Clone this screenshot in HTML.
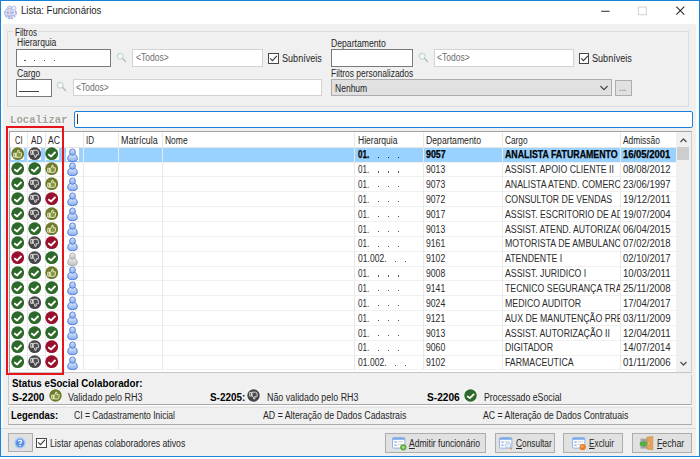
<!DOCTYPE html><html><head><meta charset="utf-8"><title>Lista: Funcionários</title><style>
html,body{margin:0;padding:0;}
body{width:700px;height:459px;overflow:hidden;background:#fff;position:relative;font-family:"Liberation Sans",sans-serif;}
#win{position:absolute;left:0;top:0;width:700px;height:459px;overflow:hidden;background:#f0f0f0;}
.a{position:absolute;box-sizing:border-box;}
.t{position:absolute;white-space:pre;transform-origin:0 100%;line-height:1;color:#1c1c1c;padding-bottom:0;}
.ui{font-size:10px;color:#262626;}
.uib{font-size:10px;font-weight:bold;color:#000;}
.g{font-size:10px;color:#2b2b2b;}
.gb{font-size:10px;font-weight:bold;color:#000;-webkit-text-stroke:0.25px #000;}
.ttl{font-size:10px;}
.loc{font-family:"Liberation Mono",monospace;font-weight:bold;font-size:11px;color:#a3a39b;text-shadow:0.8px 0.8px 0 #fff;}
.gray{color:#6d6d6d;}
.inp{background:#fff;border:1px solid #7a7a7a;}
.ro{background:#fff;border:1px solid #d2d2d2;}
.btn{background:#e1e1e1;border:1px solid #adadad;}
.cb{background:#fff;border:1px solid #474747;}
</style></head><body><div id="win">
<svg width="0" height="0" style="position:absolute"><defs>
<symbol id="i-ok" viewBox="0 0 14 14"><circle cx="7" cy="7" r="6.7" fill="#2c692b"/><path d="M3.7 8.1 L6.6 10.2 L11.2 5.7" fill="none" stroke="#c9c27a" stroke-width="1.6" opacity=".55"/><path d="M3.4 7.6 L6.3 9.7 L10.9 5.2" fill="none" stroke="#fff" stroke-width="1.8"/></symbol>
<symbol id="i-err" viewBox="0 0 14 14"><circle cx="7" cy="7" r="6.7" fill="#9a0e2e"/><path d="M3.7 8.1 L6.6 10.2 L11.2 5.7" fill="none" stroke="#e0a080" stroke-width="1.6" opacity=".5"/><path d="M3.4 7.6 L6.3 9.7 L10.9 5.2" fill="none" stroke="#fff" stroke-width="1.8"/></symbol>
<symbol id="i-up" viewBox="0 0 14 14"><circle cx="7" cy="7" r="6.7" fill="#6d7b2c"/><path d="M2.9 6.5 H4.8 V10.6 H2.9 Z M5.4 6.7 L6.8 5.6 L7.3 3.4 Q8.8 3.0 8.7 4.6 L8.4 6 L10.6 6 Q11.4 6.2 11.1 7 L10.5 10 Q10.3 10.8 9.4 10.8 L5.4 10.8 Z" fill="#8a9638" stroke="#f3f1da" stroke-width="0.95" stroke-linejoin="round"/></symbol>
<symbol id="i-dn" viewBox="0 0 14 14"><circle cx="7" cy="7" r="6.7" fill="#45454b"/><path transform="matrix(1 0 0 -1 0 14.2)" d="M2.9 6.5 H4.8 V10.6 H2.9 Z M5.4 6.7 L6.8 5.6 L7.3 3.4 Q8.8 3.0 8.7 4.6 L8.4 6 L10.6 6 Q11.4 6.2 11.1 7 L10.5 10 Q10.3 10.8 9.4 10.8 L5.4 10.8 Z" fill="#4e4e5c" stroke="#efe9d8" stroke-width="0.95" stroke-linejoin="round"/></symbol>
<linearGradient id="gu" x1="0" y1="0" x2="0" y2="1"><stop offset="0" stop-color="#dde7fb"/><stop offset="1" stop-color="#85abee"/></linearGradient>
<linearGradient id="gg" x1="0" y1="0" x2="0" y2="1"><stop offset="0" stop-color="#efefef"/><stop offset="1" stop-color="#bdbdbd"/></linearGradient>
<symbol id="i-usr" viewBox="0 0 12 14"><path d="M0.7 11.3 Q0.5 7.2 3 6.5 L8 6.5 Q10.5 7.2 10.3 11.3 Q10.2 13.5 5.5 13.7 Q0.8 13.5 0.7 11.3 Z" fill="url(#gu)" stroke="#4a78d6" stroke-width="0.9"/><ellipse cx="5.5" cy="4.1" rx="2.9" ry="3.2" fill="url(#gu)" stroke="#4a78d6" stroke-width="0.9"/></symbol>
<symbol id="i-usrg" viewBox="0 0 12 14"><path d="M0.7 11.3 Q0.5 7.2 3 6.5 L8 6.5 Q10.5 7.2 10.3 11.3 Q10.2 13.5 5.5 13.7 Q0.8 13.5 0.7 11.3 Z" fill="url(#gg)" stroke="#a4a4a4" stroke-width="0.8"/><ellipse cx="5.5" cy="4.1" rx="2.9" ry="3.2" fill="url(#gg)" stroke="#a4a4a4" stroke-width="0.8"/></symbol>
<symbol id="i-mag" viewBox="0 0 12 12"><circle cx="4.6" cy="4.6" r="3.3" fill="#f2f6f5" stroke="#b3cec8" stroke-width="1"/><path d="M3 3.6 Q3.6 2.6 4.8 2.6" fill="none" stroke="#c5d6d2" stroke-width="0.7"/><path d="M7.2 7.2 L10.4 10.4" stroke="#aebcc8" stroke-width="1.5" stroke-linecap="round"/></symbol>
</defs></svg>
<div class="a " style="left:0px;top:0px;width:700.00px;height:23.90px;background:#fff;"></div>
<span class="t ttl" style="left:20.6px;top:16.23px;transform:translateY(-100%) scaleX(0.9580);">Lista: Funcionários</span>
<svg class="a" style="left:3px;top:4px" width="16" height="16" viewBox="0 0 16 16"><ellipse cx="7.4" cy="9" rx="5.8" ry="5.6" fill="#ebebf6" stroke="#8296da" stroke-width="1" stroke-dasharray="2 1"/><ellipse cx="6.8" cy="8.6" rx="2.6" ry="5.4" fill="#d9d6ee" stroke="#a8b4e0" stroke-width="0.7"/><path d="M1.8 8 Q7 10 13 7.6 M2.6 11.6 Q7 13 12.4 11" fill="none" stroke="#748cd8" stroke-width="0.9" stroke-dasharray="1.6 1"/><circle cx="11" cy="4.2" r="2" fill="#f4f4fb" stroke="#a8b4e0" stroke-width="0.8"/><ellipse cx="6.6" cy="3.4" rx="2.2" ry="1.4" fill="#dcdcf0" stroke="#a8b4e0" stroke-width="0.7"/></svg>
<svg class="a" style="left:590px;top:0" width="110" height="24" viewBox="0 0 110 24"><path d="M11.2 11.3 H19.6" stroke="#3c3c3c" stroke-width="1.1"/><rect x="48.4" y="7.0" width="7.9" height="7.7" fill="none" stroke="#d2d2d2" stroke-width="1"/><path d="M86.3 6.7 L94.3 14.7 M94.3 6.7 L86.3 14.7" stroke="#2a2a2a" stroke-width="1.1"/></svg>
<div class="a " style="left:7.2px;top:31.0px;width:681.40px;height:76.00px;border:1px solid #dcdcdc;"></div>
<div class="a " style="left:13px;top:27px;width:25.00px;height:10.00px;background:#f0f0f0;"></div>
<span class="t ui" style="left:14.6px;top:37.54px;transform:translateY(-100%) scaleX(0.8045);">Filtros</span>
<span class="t ui" style="left:16.8px;top:48.34px;transform:translateY(-100%) scaleX(0.8519);">Hierarquia</span>
<div class="a inp" style="left:16.3px;top:49.2px;width:95.00px;height:17.50px;"></div>
<div class="a " style="left:24.4px;top:59.7px;width:1.20px;height:1.20px;background:#555;"></div>
<div class="a " style="left:34.3px;top:59.7px;width:1.20px;height:1.20px;background:#555;"></div>
<div class="a " style="left:44.1px;top:59.7px;width:1.20px;height:1.20px;background:#555;"></div>
<div class="a " style="left:53.8px;top:59.7px;width:1.20px;height:1.20px;background:#555;"></div>
<svg class="a" style="left:116.40px;top:51.70px" width="11" height="11"><use href="#i-mag"/></svg>
<div class="a ro" style="left:132.2px;top:49.3px;width:130.70px;height:17.30px;"></div>
<span class="t ui gray" style="left:135.5px;top:63.34px;transform:translateY(-100%) scaleX(0.8524);">&lt;Todos&gt;</span>
<div class="a cb" style="left:267.8px;top:53.0px;width:10.80px;height:10.80px;"></div>
<span class="t ui" style="left:281.6px;top:64.33px;transform:translateY(-100%) scaleX(0.9063);">Subníveis</span>
<span class="t ui" style="left:331.0px;top:48.54px;transform:translateY(-100%) scaleX(0.8648);">Departamento</span>
<div class="a inp" style="left:331.0px;top:49.2px;width:81.90px;height:17.50px;"></div>
<svg class="a" style="left:417.50px;top:51.70px" width="11" height="11"><use href="#i-mag"/></svg>
<div class="a ro" style="left:434.0px;top:49.3px;width:139.60px;height:17.30px;"></div>
<span class="t ui gray" style="left:437.3px;top:63.34px;transform:translateY(-100%) scaleX(0.8524);">&lt;Todos&gt;</span>
<div class="a cb" style="left:578.6px;top:53.0px;width:10.80px;height:10.80px;"></div>
<span class="t ui" style="left:592.4px;top:64.33px;transform:translateY(-100%) scaleX(0.9063);">Subníveis</span>
<span class="t ui" style="left:16.8px;top:79.13px;transform:translateY(-100%) scaleX(0.8519);">Cargo</span>
<div class="a inp" style="left:16.2px;top:79.0px;width:35.80px;height:17.60px;"></div>
<div class="a " style="left:19.0px;top:90.9px;width:20.00px;height:1.30px;background:#444;"></div>
<svg class="a" style="left:56.30px;top:81.40px" width="11" height="11"><use href="#i-mag"/></svg>
<div class="a ro" style="left:72.6px;top:79.2px;width:249.20px;height:17.00px;"></div>
<span class="t ui gray" style="left:75.9px;top:93.03px;transform:translateY(-100%) scaleX(0.8524);">&lt;Todos&gt;</span>
<span class="t ui" style="left:331.0px;top:79.13px;transform:translateY(-100%) scaleX(0.8452);">Filtros personalizados</span>
<div class="a btn" style="left:331.0px;top:79.2px;width:280.80px;height:17.00px;"></div>
<span class="t ui" style="left:334.6px;top:93.93px;transform:translateY(-100%) scaleX(0.8520);">Nenhum</span>
<svg class="a" style="left:599px;top:84px" width="10" height="8" viewBox="0 0 10 8"><path d="M1.4 2 L5 5.6 L8.6 2" fill="none" stroke="#444" stroke-width="1.1"/></svg>
<div class="a btn" style="left:615.2px;top:80.2px;width:16.40px;height:15.40px;"></div>
<span class="t ui gray" style="left:619.4px;top:92.83px;transform:translateY(-100%) scaleX(0.8750);">...</span>
<svg class="a" style="left:267.8px;top:53.0px" width="11" height="11" viewBox="0 0 11 11"><path d="M2.2 5.4 L4.5 7.7 L8.9 2.9" fill="none" stroke="#3a3a3a" stroke-width="1.15"/></svg>
<svg class="a" style="left:578.6px;top:53.0px" width="11" height="11" viewBox="0 0 11 11"><path d="M2.2 5.4 L4.5 7.7 L8.9 2.9" fill="none" stroke="#3a3a3a" stroke-width="1.15"/></svg>
<span class="t loc" style="left:10.0px;top:126.37px;transform:translateY(-100%) scaleX(0.9694);">Localizar</span>
<div class="a " style="left:74.0px;top:111.0px;width:618.80px;height:17.40px;background:#fff;border:1.1px solid #1a80d9;border-radius:2px;"></div>
<div class="a " style="left:76.7px;top:113.7px;width:1.10px;height:10.40px;background:#3a3a3a;"></div>
<div class="a " style="left:8.7px;top:131.1px;width:682.90px;height:241.50px;background:#fff;border:1px solid #9ea2aa;border-right-color:#cdcdcd;border-bottom-color:#c6c6c6;"></div>
<div class="a " style="left:9.7px;top:147.3px;width:665.90px;height:14.25px;background:#99d1ff;"></div>
<div class="a " style="left:10.799999999999999px;top:147.3px;width:13.40px;height:13.20px;background:#fff;"></div>
<div class="a " style="left:28.0px;top:147.3px;width:13.40px;height:13.20px;background:#fff;"></div>
<div class="a " style="left:45.199999999999996px;top:147.3px;width:13.40px;height:13.20px;background:#fff;"></div>
<div class="a " style="left:65.8px;top:147.3px;width:13.10px;height:13.60px;background:#fff;"></div>
<div class="a " style="left:9.7px;top:161.55px;width:665.90px;height:1.00px;background:#f0f0f0;"></div>
<div class="a " style="left:9.7px;top:176.4px;width:665.90px;height:1.00px;background:#f0f0f0;"></div>
<div class="a " style="left:9.7px;top:191.25000000000003px;width:665.90px;height:1.00px;background:#f0f0f0;"></div>
<div class="a " style="left:9.7px;top:206.10000000000002px;width:665.90px;height:1.00px;background:#f0f0f0;"></div>
<div class="a " style="left:9.7px;top:220.95000000000002px;width:665.90px;height:1.00px;background:#f0f0f0;"></div>
<div class="a " style="left:9.7px;top:235.8px;width:665.90px;height:1.00px;background:#f0f0f0;"></div>
<div class="a " style="left:9.7px;top:250.65px;width:665.90px;height:1.00px;background:#f0f0f0;"></div>
<div class="a " style="left:9.7px;top:265.5px;width:665.90px;height:1.00px;background:#f0f0f0;"></div>
<div class="a " style="left:9.7px;top:280.35px;width:665.90px;height:1.00px;background:#f0f0f0;"></div>
<div class="a " style="left:9.7px;top:295.2px;width:665.90px;height:1.00px;background:#f0f0f0;"></div>
<div class="a " style="left:9.7px;top:310.04999999999995px;width:665.90px;height:1.00px;background:#f0f0f0;"></div>
<div class="a " style="left:9.7px;top:324.9px;width:665.90px;height:1.00px;background:#f0f0f0;"></div>
<div class="a " style="left:9.7px;top:339.75px;width:665.90px;height:1.00px;background:#f0f0f0;"></div>
<div class="a " style="left:9.7px;top:354.6px;width:665.90px;height:1.00px;background:#f0f0f0;"></div>
<div class="a " style="left:9.7px;top:369.45px;width:665.90px;height:1.00px;background:#f0f0f0;"></div>
<div class="a " style="left:9.7px;top:146.6px;width:665.90px;height:0.80px;background:#e5e5e5;"></div>
<div class="a " style="left:26.9px;top:132.1px;width:1.00px;height:237.95px;background:#e9e9e9;"></div>
<div class="a " style="left:44.5px;top:132.1px;width:1.00px;height:237.95px;background:#e9e9e9;"></div>
<div class="a " style="left:62.5px;top:132.1px;width:1.00px;height:237.95px;background:#e9e9e9;"></div>
<div class="a " style="left:83.1px;top:132.1px;width:1.00px;height:237.95px;background:#e9e9e9;"></div>
<div class="a " style="left:118.1px;top:132.1px;width:1.00px;height:237.95px;background:#e9e9e9;"></div>
<div class="a " style="left:162.1px;top:132.1px;width:1.00px;height:237.95px;background:#e9e9e9;"></div>
<div class="a " style="left:354.1px;top:132.1px;width:1.00px;height:237.95px;background:#e9e9e9;"></div>
<div class="a " style="left:422.5px;top:132.1px;width:1.00px;height:237.95px;background:#e9e9e9;"></div>
<div class="a " style="left:502.1px;top:132.1px;width:1.00px;height:237.95px;background:#e9e9e9;"></div>
<div class="a " style="left:620.1px;top:132.1px;width:1.00px;height:237.95px;background:#e9e9e9;"></div>
<span class="t ui" style="left:15.0px;top:145.84px;transform:translateY(-100%) scaleX(0.7500);">CI</span>
<span class="t ui" style="left:30.5px;top:145.84px;transform:translateY(-100%) scaleX(0.8062);">AD</span>
<span class="t ui" style="left:47.7px;top:145.84px;transform:translateY(-100%) scaleX(0.8638);">AC</span>
<span class="t ui" style="left:85.9px;top:145.84px;transform:translateY(-100%) scaleX(0.8100);">ID</span>
<span class="t ui" style="left:121.2px;top:145.84px;transform:translateY(-100%) scaleX(0.8949);">Matrícula</span>
<span class="t ui" style="left:165.4px;top:145.84px;transform:translateY(-100%) scaleX(0.8473);">Nome</span>
<span class="t ui" style="left:357.6px;top:145.84px;transform:translateY(-100%) scaleX(0.8541);">Hierarquia</span>
<span class="t ui" style="left:426.0px;top:145.84px;transform:translateY(-100%) scaleX(0.8680);">Departamento</span>
<span class="t ui" style="left:505.0px;top:145.84px;transform:translateY(-100%) scaleX(0.8298);">Cargo</span>
<span class="t ui" style="left:623.2px;top:145.84px;transform:translateY(-100%) scaleX(0.8382);">Admissão</span>
<svg class="a" style="left:10.70px;top:147.35px" width="13.4" height="13.4"><use href="#i-up"/></svg>
<svg class="a" style="left:27.90px;top:147.35px" width="13.4" height="13.4"><use href="#i-dn"/></svg>
<svg class="a" style="left:45.10px;top:147.35px" width="13.4" height="13.4"><use href="#i-ok"/></svg>
<svg class="a" style="left:67px;top:147.60px" width="12" height="14"><use href="#i-usr"/></svg>
<span class="t gb" style="left:357.5px;top:160.34px;transform:translateY(-100%) scaleX(0.8058);">01.</span>
<div class="a " style="left:377.5px;top:156.6px;width:1.60px;height:1.20px;background:#222;"></div>
<div class="a " style="left:387.5px;top:156.6px;width:1.60px;height:1.20px;background:#222;"></div>
<div class="a " style="left:397.5px;top:156.6px;width:1.60px;height:1.20px;background:#222;"></div>
<span class="t gb" style="left:426.0px;top:160.34px;transform:translateY(-100%) scaleX(0.8811);">9057</span>
<div class="a" style="left:503px;top:147.30px;width:116.6px;height:14.85px;overflow:hidden;">
<span class="t gb" style="left:2.2px;top:13.04px;transform:translateY(-100%) scaleX(0.8800);">ANALISTA FATURAMENTO</span></div>
<span class="t gb" style="left:623.2px;top:160.34px;transform:translateY(-100%) scaleX(0.9432);">16/05/2001</span>
<svg class="a" style="left:10.70px;top:162.20px" width="13.4" height="13.4"><use href="#i-ok"/></svg>
<svg class="a" style="left:27.90px;top:162.20px" width="13.4" height="13.4"><use href="#i-ok"/></svg>
<svg class="a" style="left:45.10px;top:162.20px" width="13.4" height="13.4"><use href="#i-up"/></svg>
<svg class="a" style="left:67px;top:162.45px" width="12" height="14"><use href="#i-usr"/></svg>
<span class="t g" style="left:357.5px;top:175.19px;transform:translateY(-100%) scaleX(0.8058);">01.</span>
<div class="a " style="left:377.5px;top:171.45px;width:1.20px;height:1.20px;background:#555;"></div>
<div class="a " style="left:387.5px;top:171.45px;width:1.20px;height:1.20px;background:#555;"></div>
<div class="a " style="left:397.5px;top:171.45px;width:1.20px;height:1.20px;background:#555;"></div>
<span class="t g" style="left:426.0px;top:175.19px;transform:translateY(-100%) scaleX(0.8632);">9013</span>
<div class="a" style="left:503px;top:162.15px;width:116.6px;height:14.85px;overflow:hidden;">
<span class="t g" style="left:2.2px;top:13.04px;transform:translateY(-100%) scaleX(0.8750);">ASSIST. APOIO CLIENTE II</span></div>
<span class="t g" style="left:623.2px;top:175.19px;transform:translateY(-100%) scaleX(0.9512);">08/08/2012</span>
<svg class="a" style="left:10.70px;top:177.05px" width="13.4" height="13.4"><use href="#i-ok"/></svg>
<svg class="a" style="left:27.90px;top:177.05px" width="13.4" height="13.4"><use href="#i-dn"/></svg>
<svg class="a" style="left:45.10px;top:177.05px" width="13.4" height="13.4"><use href="#i-up"/></svg>
<svg class="a" style="left:67px;top:177.30px" width="12" height="14"><use href="#i-usr"/></svg>
<span class="t g" style="left:357.5px;top:190.03px;transform:translateY(-100%) scaleX(0.8058);">01.</span>
<div class="a " style="left:377.5px;top:186.29999999999998px;width:1.20px;height:1.20px;background:#555;"></div>
<div class="a " style="left:387.5px;top:186.29999999999998px;width:1.20px;height:1.20px;background:#555;"></div>
<div class="a " style="left:397.5px;top:186.29999999999998px;width:1.20px;height:1.20px;background:#555;"></div>
<span class="t g" style="left:426.0px;top:190.03px;transform:translateY(-100%) scaleX(0.8632);">9073</span>
<div class="a" style="left:503px;top:177.00px;width:116.6px;height:14.85px;overflow:hidden;">
<span class="t g" style="left:2.2px;top:13.04px;transform:translateY(-100%) scaleX(0.8750);">ANALISTA ATEND. COMERCIAL</span></div>
<span class="t g" style="left:623.2px;top:190.03px;transform:translateY(-100%) scaleX(0.9512);">23/06/1997</span>
<svg class="a" style="left:10.70px;top:191.90px" width="13.4" height="13.4"><use href="#i-ok"/></svg>
<svg class="a" style="left:27.90px;top:191.90px" width="13.4" height="13.4"><use href="#i-dn"/></svg>
<svg class="a" style="left:45.10px;top:191.90px" width="13.4" height="13.4"><use href="#i-err"/></svg>
<svg class="a" style="left:67px;top:192.15px" width="12" height="14"><use href="#i-usr"/></svg>
<span class="t g" style="left:357.5px;top:204.89px;transform:translateY(-100%) scaleX(0.8058);">01.</span>
<div class="a " style="left:377.5px;top:201.15px;width:1.20px;height:1.20px;background:#555;"></div>
<div class="a " style="left:387.5px;top:201.15px;width:1.20px;height:1.20px;background:#555;"></div>
<div class="a " style="left:397.5px;top:201.15px;width:1.20px;height:1.20px;background:#555;"></div>
<span class="t g" style="left:426.0px;top:204.89px;transform:translateY(-100%) scaleX(0.8632);">9072</span>
<div class="a" style="left:503px;top:191.85px;width:116.6px;height:14.85px;overflow:hidden;">
<span class="t g" style="left:2.2px;top:13.04px;transform:translateY(-100%) scaleX(0.8750);">CONSULTOR DE VENDAS</span></div>
<span class="t g" style="left:623.2px;top:204.89px;transform:translateY(-100%) scaleX(0.9655);">19/12/2011</span>
<svg class="a" style="left:10.70px;top:206.75px" width="13.4" height="13.4"><use href="#i-ok"/></svg>
<svg class="a" style="left:27.90px;top:206.75px" width="13.4" height="13.4"><use href="#i-dn"/></svg>
<svg class="a" style="left:45.10px;top:206.75px" width="13.4" height="13.4"><use href="#i-up"/></svg>
<svg class="a" style="left:67px;top:207.00px" width="12" height="14"><use href="#i-usr"/></svg>
<span class="t g" style="left:357.5px;top:219.74px;transform:translateY(-100%) scaleX(0.8058);">01.</span>
<div class="a " style="left:377.5px;top:216.0px;width:1.20px;height:1.20px;background:#555;"></div>
<div class="a " style="left:387.5px;top:216.0px;width:1.20px;height:1.20px;background:#555;"></div>
<div class="a " style="left:397.5px;top:216.0px;width:1.20px;height:1.20px;background:#555;"></div>
<span class="t g" style="left:426.0px;top:219.74px;transform:translateY(-100%) scaleX(0.8632);">9017</span>
<div class="a" style="left:503px;top:206.70px;width:116.6px;height:14.85px;overflow:hidden;">
<span class="t g" style="left:2.2px;top:13.04px;transform:translateY(-100%) scaleX(0.8750);">ASSIST. ESCRITORIO DE ADVOCACIA</span></div>
<span class="t g" style="left:623.2px;top:219.74px;transform:translateY(-100%) scaleX(0.9512);">19/07/2004</span>
<svg class="a" style="left:10.70px;top:221.60px" width="13.4" height="13.4"><use href="#i-ok"/></svg>
<svg class="a" style="left:27.90px;top:221.60px" width="13.4" height="13.4"><use href="#i-ok"/></svg>
<svg class="a" style="left:45.10px;top:221.60px" width="13.4" height="13.4"><use href="#i-up"/></svg>
<svg class="a" style="left:67px;top:221.85px" width="12" height="14"><use href="#i-usr"/></svg>
<span class="t g" style="left:357.5px;top:234.59px;transform:translateY(-100%) scaleX(0.8058);">01.</span>
<div class="a " style="left:377.5px;top:230.85px;width:1.20px;height:1.20px;background:#555;"></div>
<div class="a " style="left:387.5px;top:230.85px;width:1.20px;height:1.20px;background:#555;"></div>
<div class="a " style="left:397.5px;top:230.85px;width:1.20px;height:1.20px;background:#555;"></div>
<span class="t g" style="left:426.0px;top:234.59px;transform:translateY(-100%) scaleX(0.8632);">9013</span>
<div class="a" style="left:503px;top:221.55px;width:116.6px;height:14.85px;overflow:hidden;">
<span class="t g" style="left:2.2px;top:13.04px;transform:translateY(-100%) scaleX(0.8750);">ASSIST. ATEND. AUTORIZAÇÃO</span></div>
<span class="t g" style="left:623.2px;top:234.59px;transform:translateY(-100%) scaleX(0.9512);">06/04/2015</span>
<svg class="a" style="left:10.70px;top:236.45px" width="13.4" height="13.4"><use href="#i-ok"/></svg>
<svg class="a" style="left:27.90px;top:236.45px" width="13.4" height="13.4"><use href="#i-dn"/></svg>
<svg class="a" style="left:45.10px;top:236.45px" width="13.4" height="13.4"><use href="#i-err"/></svg>
<svg class="a" style="left:67px;top:236.70px" width="12" height="14"><use href="#i-usr"/></svg>
<span class="t g" style="left:357.5px;top:249.44px;transform:translateY(-100%) scaleX(0.8058);">01.</span>
<div class="a " style="left:377.5px;top:245.7px;width:1.20px;height:1.20px;background:#555;"></div>
<div class="a " style="left:387.5px;top:245.7px;width:1.20px;height:1.20px;background:#555;"></div>
<div class="a " style="left:397.5px;top:245.7px;width:1.20px;height:1.20px;background:#555;"></div>
<span class="t g" style="left:426.0px;top:249.44px;transform:translateY(-100%) scaleX(0.8632);">9161</span>
<div class="a" style="left:503px;top:236.40px;width:116.6px;height:14.85px;overflow:hidden;">
<span class="t g" style="left:2.2px;top:13.04px;transform:translateY(-100%) scaleX(0.8750);">MOTORISTA DE AMBULANCIA</span></div>
<span class="t g" style="left:623.2px;top:249.44px;transform:translateY(-100%) scaleX(0.9512);">07/02/2018</span>
<svg class="a" style="left:10.70px;top:251.30px" width="13.4" height="13.4"><use href="#i-err"/></svg>
<svg class="a" style="left:27.90px;top:251.30px" width="13.4" height="13.4"><use href="#i-dn"/></svg>
<svg class="a" style="left:45.10px;top:251.30px" width="13.4" height="13.4"><use href="#i-ok"/></svg>
<svg class="a" style="left:67px;top:251.55px" width="12" height="14"><use href="#i-usrg"/></svg>
<span class="t g" style="left:357.5px;top:264.28px;transform:translateY(-100%) scaleX(0.8573);">01.002.</span>
<div class="a " style="left:395.0px;top:260.55px;width:1.20px;height:1.20px;background:#555;"></div>
<div class="a " style="left:404.9px;top:260.55px;width:1.20px;height:1.20px;background:#555;"></div>
<span class="t g" style="left:426.0px;top:264.28px;transform:translateY(-100%) scaleX(0.8632);">9102</span>
<div class="a" style="left:503px;top:251.25px;width:116.6px;height:14.85px;overflow:hidden;">
<span class="t g" style="left:2.2px;top:13.04px;transform:translateY(-100%) scaleX(0.8750);">ATENDENTE I</span></div>
<span class="t g" style="left:623.2px;top:264.28px;transform:translateY(-100%) scaleX(0.9512);">02/10/2017</span>
<svg class="a" style="left:10.70px;top:266.15px" width="13.4" height="13.4"><use href="#i-ok"/></svg>
<svg class="a" style="left:27.90px;top:266.15px" width="13.4" height="13.4"><use href="#i-ok"/></svg>
<svg class="a" style="left:45.10px;top:266.15px" width="13.4" height="13.4"><use href="#i-up"/></svg>
<svg class="a" style="left:67px;top:266.40px" width="12" height="14"><use href="#i-usr"/></svg>
<span class="t g" style="left:357.5px;top:279.13px;transform:translateY(-100%) scaleX(0.8058);">01.</span>
<div class="a " style="left:377.5px;top:275.40000000000003px;width:1.20px;height:1.20px;background:#555;"></div>
<div class="a " style="left:387.5px;top:275.40000000000003px;width:1.20px;height:1.20px;background:#555;"></div>
<div class="a " style="left:397.5px;top:275.40000000000003px;width:1.20px;height:1.20px;background:#555;"></div>
<span class="t g" style="left:426.0px;top:279.13px;transform:translateY(-100%) scaleX(0.8632);">9008</span>
<div class="a" style="left:503px;top:266.10px;width:116.6px;height:14.85px;overflow:hidden;">
<span class="t g" style="left:2.2px;top:13.04px;transform:translateY(-100%) scaleX(0.8750);">ASSIST. JURIDICO I</span></div>
<span class="t g" style="left:623.2px;top:279.13px;transform:translateY(-100%) scaleX(0.9655);">10/03/2011</span>
<svg class="a" style="left:10.70px;top:281.00px" width="13.4" height="13.4"><use href="#i-ok"/></svg>
<svg class="a" style="left:27.90px;top:281.00px" width="13.4" height="13.4"><use href="#i-ok"/></svg>
<svg class="a" style="left:45.10px;top:281.00px" width="13.4" height="13.4"><use href="#i-ok"/></svg>
<svg class="a" style="left:67px;top:281.25px" width="12" height="14"><use href="#i-usr"/></svg>
<span class="t g" style="left:357.5px;top:293.99px;transform:translateY(-100%) scaleX(0.8058);">01.</span>
<div class="a " style="left:377.5px;top:290.25000000000006px;width:1.20px;height:1.20px;background:#555;"></div>
<div class="a " style="left:387.5px;top:290.25000000000006px;width:1.20px;height:1.20px;background:#555;"></div>
<div class="a " style="left:397.5px;top:290.25000000000006px;width:1.20px;height:1.20px;background:#555;"></div>
<span class="t g" style="left:426.0px;top:293.99px;transform:translateY(-100%) scaleX(0.8632);">9141</span>
<div class="a" style="left:503px;top:280.95px;width:116.6px;height:14.85px;overflow:hidden;">
<span class="t g" style="left:2.2px;top:13.04px;transform:translateY(-100%) scaleX(0.8750);">TECNICO SEGURANÇA TRABALHO</span></div>
<span class="t g" style="left:623.2px;top:293.99px;transform:translateY(-100%) scaleX(0.9655);">25/11/2008</span>
<svg class="a" style="left:10.70px;top:295.85px" width="13.4" height="13.4"><use href="#i-ok"/></svg>
<svg class="a" style="left:27.90px;top:295.85px" width="13.4" height="13.4"><use href="#i-dn"/></svg>
<svg class="a" style="left:45.10px;top:295.85px" width="13.4" height="13.4"><use href="#i-ok"/></svg>
<svg class="a" style="left:67px;top:296.10px" width="12" height="14"><use href="#i-usr"/></svg>
<span class="t g" style="left:357.5px;top:308.83px;transform:translateY(-100%) scaleX(0.8058);">01.</span>
<div class="a " style="left:377.5px;top:305.1px;width:1.20px;height:1.20px;background:#555;"></div>
<div class="a " style="left:387.5px;top:305.1px;width:1.20px;height:1.20px;background:#555;"></div>
<div class="a " style="left:397.5px;top:305.1px;width:1.20px;height:1.20px;background:#555;"></div>
<span class="t g" style="left:426.0px;top:308.83px;transform:translateY(-100%) scaleX(0.8632);">9024</span>
<div class="a" style="left:503px;top:295.80px;width:116.6px;height:14.85px;overflow:hidden;">
<span class="t g" style="left:2.2px;top:13.04px;transform:translateY(-100%) scaleX(0.8750);">MEDICO AUDITOR</span></div>
<span class="t g" style="left:623.2px;top:308.83px;transform:translateY(-100%) scaleX(0.9512);">17/04/2017</span>
<svg class="a" style="left:10.70px;top:310.70px" width="13.4" height="13.4"><use href="#i-ok"/></svg>
<svg class="a" style="left:27.90px;top:310.70px" width="13.4" height="13.4"><use href="#i-ok"/></svg>
<svg class="a" style="left:45.10px;top:310.70px" width="13.4" height="13.4"><use href="#i-err"/></svg>
<svg class="a" style="left:67px;top:310.95px" width="12" height="14"><use href="#i-usr"/></svg>
<span class="t g" style="left:357.5px;top:323.68px;transform:translateY(-100%) scaleX(0.8058);">01.</span>
<div class="a " style="left:377.5px;top:319.95px;width:1.20px;height:1.20px;background:#555;"></div>
<div class="a " style="left:387.5px;top:319.95px;width:1.20px;height:1.20px;background:#555;"></div>
<div class="a " style="left:397.5px;top:319.95px;width:1.20px;height:1.20px;background:#555;"></div>
<span class="t g" style="left:426.0px;top:323.68px;transform:translateY(-100%) scaleX(0.8632);">9121</span>
<div class="a" style="left:503px;top:310.65px;width:116.6px;height:14.85px;overflow:hidden;">
<span class="t g" style="left:2.2px;top:13.04px;transform:translateY(-100%) scaleX(0.8750);">AUX DE MANUTENÇÃO PREDIAL</span></div>
<span class="t g" style="left:623.2px;top:323.68px;transform:translateY(-100%) scaleX(0.9655);">03/11/2009</span>
<svg class="a" style="left:10.70px;top:325.55px" width="13.4" height="13.4"><use href="#i-ok"/></svg>
<svg class="a" style="left:27.90px;top:325.55px" width="13.4" height="13.4"><use href="#i-ok"/></svg>
<svg class="a" style="left:45.10px;top:325.55px" width="13.4" height="13.4"><use href="#i-ok"/></svg>
<svg class="a" style="left:67px;top:325.80px" width="12" height="14"><use href="#i-usr"/></svg>
<span class="t g" style="left:357.5px;top:338.53px;transform:translateY(-100%) scaleX(0.8058);">01.</span>
<div class="a " style="left:377.5px;top:334.8px;width:1.20px;height:1.20px;background:#555;"></div>
<div class="a " style="left:387.5px;top:334.8px;width:1.20px;height:1.20px;background:#555;"></div>
<div class="a " style="left:397.5px;top:334.8px;width:1.20px;height:1.20px;background:#555;"></div>
<span class="t g" style="left:426.0px;top:338.53px;transform:translateY(-100%) scaleX(0.8632);">9013</span>
<div class="a" style="left:503px;top:325.50px;width:116.6px;height:14.85px;overflow:hidden;">
<span class="t g" style="left:2.2px;top:13.04px;transform:translateY(-100%) scaleX(0.8750);">ASSIST. AUTORIZAÇÃO II</span></div>
<span class="t g" style="left:623.2px;top:338.53px;transform:translateY(-100%) scaleX(0.9655);">12/04/2011</span>
<svg class="a" style="left:10.70px;top:340.40px" width="13.4" height="13.4"><use href="#i-ok"/></svg>
<svg class="a" style="left:27.90px;top:340.40px" width="13.4" height="13.4"><use href="#i-dn"/></svg>
<svg class="a" style="left:45.10px;top:340.40px" width="13.4" height="13.4"><use href="#i-err"/></svg>
<svg class="a" style="left:67px;top:340.65px" width="12" height="14"><use href="#i-usr"/></svg>
<span class="t g" style="left:357.5px;top:353.38px;transform:translateY(-100%) scaleX(0.8058);">01.</span>
<div class="a " style="left:377.5px;top:349.65000000000003px;width:1.20px;height:1.20px;background:#555;"></div>
<div class="a " style="left:387.5px;top:349.65000000000003px;width:1.20px;height:1.20px;background:#555;"></div>
<div class="a " style="left:397.5px;top:349.65000000000003px;width:1.20px;height:1.20px;background:#555;"></div>
<span class="t g" style="left:426.0px;top:353.38px;transform:translateY(-100%) scaleX(0.8632);">9060</span>
<div class="a" style="left:503px;top:340.35px;width:116.6px;height:14.85px;overflow:hidden;">
<span class="t g" style="left:2.2px;top:13.04px;transform:translateY(-100%) scaleX(0.8750);">DIGITADOR</span></div>
<span class="t g" style="left:623.2px;top:353.38px;transform:translateY(-100%) scaleX(0.9512);">14/07/2014</span>
<svg class="a" style="left:10.70px;top:355.25px" width="13.4" height="13.4"><use href="#i-ok"/></svg>
<svg class="a" style="left:27.90px;top:355.25px" width="13.4" height="13.4"><use href="#i-dn"/></svg>
<svg class="a" style="left:45.10px;top:355.25px" width="13.4" height="13.4"><use href="#i-err"/></svg>
<svg class="a" style="left:67px;top:355.50px" width="12" height="14"><use href="#i-usr"/></svg>
<span class="t g" style="left:357.5px;top:368.24px;transform:translateY(-100%) scaleX(0.8573);">01.002.</span>
<div class="a " style="left:395.0px;top:364.50000000000006px;width:1.20px;height:1.20px;background:#555;"></div>
<div class="a " style="left:404.9px;top:364.50000000000006px;width:1.20px;height:1.20px;background:#555;"></div>
<span class="t g" style="left:426.0px;top:368.24px;transform:translateY(-100%) scaleX(0.8632);">9102</span>
<div class="a" style="left:503px;top:355.20px;width:116.6px;height:14.85px;overflow:hidden;">
<span class="t g" style="left:2.2px;top:13.04px;transform:translateY(-100%) scaleX(0.8750);">FARMACEUTICA</span></div>
<span class="t g" style="left:623.2px;top:368.24px;transform:translateY(-100%) scaleX(0.9655);">01/11/2006</span>
<div class="a " style="left:675.6px;top:132.1px;width:15.00px;height:239.50px;background:#f0f0f0;"></div>
<div class="a " style="left:677.0px;top:147.2px;width:12.20px;height:13.20px;background:#cdcdcd;"></div>
<svg class="a" style="left:678.7px;top:136.6px" width="9" height="7" viewBox="0 0 9 7"><path d="M1.5 5 L4.5 2 L7.5 5" fill="none" stroke="#505050" stroke-width="1.25"/></svg>
<svg class="a" style="left:678.7px;top:360.2px" width="9" height="7" viewBox="0 0 9 7"><path d="M1.5 2 L4.5 5 L7.5 2" fill="none" stroke="#505050" stroke-width="1.25"/></svg>
<div class="a " style="left:5.8px;top:126.0px;width:58.60px;height:248.70px;border:2.3px solid #e8141c;"></div>
<div class="a " style="left:8.4px;top:374.6px;width:683.40px;height:30.80px;border-left:1px solid #c8c8c8;border-bottom:1px solid #a9a9a9;border-right:1px solid #c8c8c8;"></div>
<div class="a " style="left:8.4px;top:405.2px;width:683.40px;height:0.80px;background:#fff;"></div>
<span class="t uib" style="left:12.0px;top:388.63px;transform:translateY(-100%) scaleX(0.9746);">Status eSocial Colaborador:</span>
<span class="t uib" style="left:12.0px;top:402.63px;transform:translateY(-100%) scaleX(1.0048);">S-2200</span>
<div class="a " style="left:48.8px;top:389.0px;width:13.20px;height:13.00px;background:rgba(255,255,255,.55);"></div>
<svg class="a" style="left:48.90px;top:389.00px" width="13.0" height="13.0"><use href="#i-up"/></svg>
<span class="t ui" style="left:68.0px;top:402.63px;transform:translateY(-100%) scaleX(0.9015);">Validado pelo RH3</span>
<span class="t uib" style="left:210.0px;top:402.63px;transform:translateY(-100%) scaleX(0.9895);">S-2205:</span>
<div class="a " style="left:246.6px;top:389.0px;width:13.20px;height:13.00px;background:rgba(255,255,255,.55);"></div>
<svg class="a" style="left:246.70px;top:389.00px" width="13.0" height="13.0"><use href="#i-dn"/></svg>
<span class="t ui" style="left:266.9px;top:402.63px;transform:translateY(-100%) scaleX(0.8888);">Não validado pelo RH3</span>
<span class="t uib" style="left:426.9px;top:402.63px;transform:translateY(-100%) scaleX(1.0142);">S-2206</span>
<div class="a " style="left:464.0px;top:389.0px;width:13.20px;height:13.00px;background:rgba(255,255,255,.55);"></div>
<svg class="a" style="left:464.10px;top:389.00px" width="13.0" height="13.0"><use href="#i-ok"/></svg>
<span class="t ui" style="left:484.3px;top:402.63px;transform:translateY(-100%) scaleX(0.8769);">Processado eSocial</span>
<div class="a " style="left:8.4px;top:406.8px;width:683.40px;height:17.80px;border-left:1px solid #c8c8c8;border-bottom:1px solid #a9a9a9;border-right:1px solid #c8c8c8;border-top:1px solid #e4e4e4;"></div>
<span class="t uib" style="left:11.2px;top:420.94px;transform:translateY(-100%) scaleX(0.9419);">Legendas:</span>
<span class="t ui" style="left:74.0px;top:420.94px;transform:translateY(-100%) scaleX(0.8552);">CI = Cadastramento Inicial</span>
<span class="t ui" style="left:263.4px;top:420.94px;transform:translateY(-100%) scaleX(0.8784);">AD = Alteração de Dados Cadastrais</span>
<span class="t ui" style="left:483.2px;top:420.94px;transform:translateY(-100%) scaleX(0.8728);">AC = Alteração de Dados Contratuais</span>
<div class="a " style="left:1px;top:428.4px;width:698.00px;height:1.00px;background:#fff;"></div>
<div class="a " style="left:1px;top:427.6px;width:698.00px;height:0.80px;background:#dcdcdc;"></div>
<div class="a btn" style="left:8.2px;top:433.0px;width:24.40px;height:19.40px;"></div>
<svg class="a" style="left:13.4px;top:435.6px" width="14" height="14" viewBox="0 0 14 14"><circle cx="7" cy="7" r="6.2" fill="#c7d8f2"/><circle cx="7" cy="7" r="4.6" fill="#5b8fe0"/><circle cx="7" cy="7" r="4.6" fill="none" stroke="#9dbcf0" stroke-width="0.8"/><path d="M5.4 5.6 Q5.4 4.2 7 4.2 Q8.6 4.2 8.6 5.5 Q8.6 6.4 7 7.2 V8" fill="none" stroke="#fff" stroke-width="1.2"/><circle cx="7" cy="9.6" r="0.8" fill="#fff"/></svg>
<div class="a cb" style="left:36.4px;top:437.6px;width:10.60px;height:10.60px;"></div>
<svg class="a" style="left:36.2px;top:437.4px" width="11" height="11" viewBox="0 0 11 11"><path d="M2.2 5.4 L4.5 7.7 L8.9 2.9" fill="none" stroke="#3a3a3a" stroke-width="1.15"/></svg>
<span class="t ui" style="left:49.7px;top:449.13px;transform:translateY(-100%) scaleX(0.8724);">Listar apenas colaboradores ativos</span>
<div class="a btn" style="left:385.2px;top:433.0px;width:101.20px;height:19.60px;"></div>
<svg class="a" style="left:391.6px;top:436.6px" width="16" height="15" viewBox="0 0 16 15"><rect x="0.5" y="0.5" width="12.4" height="10.6" rx="1.2" fill="#fdfdfe" stroke="#8fb3ea" stroke-width="1"/><path d="M0.6 1 H12.8 V2.8 H0.6 Z" fill="#7daaea"/><path d="M2.4 5 H4.6 M2.4 8.2 H4.6" stroke="#5f8fe2" stroke-width="1"/><path d="M5.6 4.8 H10.8 M5.6 7.6 H9.4" stroke="#cfcfcf" stroke-width="1"/><circle cx="11.3" cy="10.3" r="3.1" fill="#5aa83a"/><circle cx="11.3" cy="10.3" r="1.5" fill="#a8dc8c"/></svg>
<span class="t ui" style="left:409.1px;top:448.94px;transform:translateY(-100%) scaleX(0.8562);"><u>A</u>dmitir funcionário</span>
<div class="a btn" style="left:495.0px;top:433.0px;width:59.80px;height:19.60px;"></div>
<svg class="a" style="left:498.8px;top:436.6px" width="16" height="15" viewBox="0 0 16 15"><rect x="0.5" y="0.5" width="12.4" height="10.6" rx="1.2" fill="#fdfdfe" stroke="#8fb3ea" stroke-width="1"/><path d="M0.6 1 H12.8 V2.8 H0.6 Z" fill="#7daaea"/><path d="M2.4 5 H4.6 M2.4 8.2 H4.6" stroke="#5f8fe2" stroke-width="1"/><path d="M5.6 4.8 H10.8 M5.6 7.6 H9.4" stroke="#cfcfcf" stroke-width="1"/><circle cx="9.2" cy="8.4" r="2.6" fill="#e6f0fb" stroke="#a8c4e8" stroke-width="0.9"/><path d="M11.2 10.6 L12.6 12.2" stroke="#e09040" stroke-width="1.4"/></svg>
<span class="t ui" style="left:515.8px;top:448.94px;transform:translateY(-100%) scaleX(0.8365);"><u>C</u>onsultar</span>
<div class="a btn" style="left:563.2px;top:433.0px;width:59.80px;height:19.60px;"></div>
<svg class="a" style="left:572.0px;top:436.6px" width="16" height="15" viewBox="0 0 16 15"><rect x="0.5" y="0.5" width="12.4" height="10.6" rx="1.2" fill="#fdfdfe" stroke="#8fb3ea" stroke-width="1"/><path d="M0.6 1 H12.8 V2.8 H0.6 Z" fill="#7daaea"/><path d="M2.4 5 H4.6 M2.4 8.2 H4.6" stroke="#5f8fe2" stroke-width="1"/><path d="M5.6 4.8 H10.8 M5.6 7.6 H9.4" stroke="#cfcfcf" stroke-width="1"/><circle cx="10.7" cy="10.0" r="3.1" fill="#f07820"/><circle cx="10.2" cy="9.5" r="1.3" fill="#f8b070"/></svg>
<span class="t ui" style="left:589.0px;top:448.94px;transform:translateY(-100%) scaleX(0.8299);"><u>E</u>xcluir</span>
<div class="a btn" style="left:631.8px;top:433.0px;width:60.00px;height:19.60px;"></div>
<svg class="a" style="left:639px;top:435px" width="16" height="16" viewBox="0 0 16 16"><rect x="1.4" y="3.6" width="7" height="10" fill="#a6a6a6"/><path d="M8 2.2 L13.8 1.4 V14.8 L8 14 Z" fill="#e2a45c" stroke="#c88a3c" stroke-width="0.6"/><circle cx="9.4" cy="8.4" r="0.6" fill="#f8e0a0"/><path d="M1.2 7.4 H4.8 V5.8 L8.2 8.8 L4.8 11.8 V10.2 H1.2 Z" fill="#4cbc3c" stroke="#2f9424" stroke-width="0.5"/></svg>
<span class="t ui" style="left:656.8px;top:448.94px;transform:translateY(-100%) scaleX(0.8740);"><u>F</u>echar</span>
<div class="a " style="left:1px;top:24.3px;width:2.30px;height:403.30px;background:#fbfbfb;"></div>
<div class="a " style="left:696.2px;top:24.3px;width:2.80px;height:431.70px;background:#fbfbfb;"></div>
<div class="a " style="left:0px;top:0px;width:700.00px;height:457.30px;border:1px solid #1883d7;border-right-width:1.2px;border-bottom-width:1.3px;pointer-events:none;"></div>
<div class="a " style="left:0px;top:457.3px;width:700.00px;height:1.70px;background:#fff;"></div>
</div></body></html>
